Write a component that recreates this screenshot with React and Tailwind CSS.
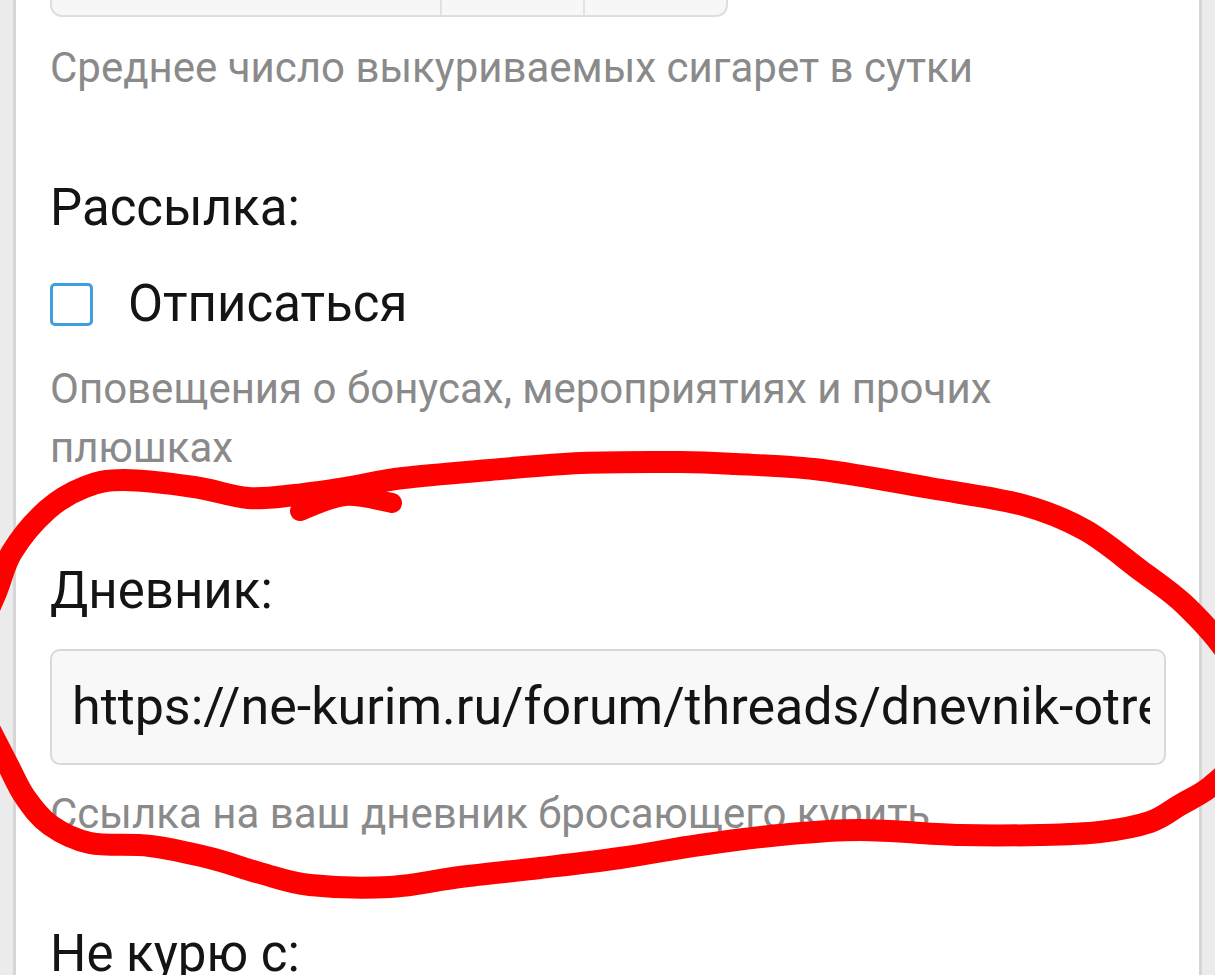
import React from 'react';

// points traced along the centre of the red marker stroke
const loop = [
  [-30, 650], [-5, 595], [12, 552], [47, 510], [85, 487], [124, 480], [194, 487], [248, 498], [295, 495],
  [345, 488], [403, 478], [490, 470], [581, 463], [680, 462], [736, 464], [822, 470], [930, 488],
  [1023, 505], [1085, 530], [1140, 570], [1185, 605], [1228, 655], [1250, 715], [1236, 760],
  [1210, 787], [1180, 805], [1150, 822], [1100, 832], [1040, 835], [960, 835], [860, 830], [780, 835],
  [700, 845], [620, 858], [540, 868], [460, 877], [390, 887], [310, 885], [260, 873],
  [210, 858], [150, 846], [90, 843], [50, 825], [25, 797], [8, 765], [-10, 730], [-30, 690],
];
const hook = [[300, 511], [345, 496], [392, 503]];

function smoothPath(pts) {
  let d = `M ${pts[0][0]} ${pts[0][1]}`;
  for (let i = 0; i < pts.length - 1; i++) {
    const p0 = pts[i - 1] || pts[i];
    const p1 = pts[i];
    const p2 = pts[i + 1];
    const p3 = pts[i + 2] || p2;
    const c1 = [p1[0] + (p2[0] - p0[0]) / 6, p1[1] + (p2[1] - p0[1]) / 6];
    const c2 = [p2[0] - (p3[0] - p1[0]) / 6, p2[1] - (p3[1] - p1[1]) / 6];
    d += ` C ${c1[0]} ${c1[1]} ${c2[0]} ${c2[1]} ${p2[0]} ${p2[1]}`;
  }
  return d;
}

const Label = ({ children, className = '' }) => (
  <div className={`text-[51px] leading-[60px] text-[#141414] ${className}`}>{children}</div>
);

const Hint = ({ children, className = '' }) => (
  <div className={`text-[42px] leading-[59px] text-[#8a8a8a] ${className}`}>{children}</div>
);

export default function App() {
  return (
    <div
      className="relative flex h-[975px] w-full overflow-hidden bg-[#ebebeb]"
      style={{ fontFamily: 'Roboto, "Noto Sans", sans-serif' }}
    >
      <div className="w-[13px] shrink-0" />
      <div className="min-w-0 flex-1 border-x-[3px] border-[#d6d6d6] bg-white pl-[34px] pr-[33px]">
        {/* tail of the number spinner above */}
        <div className="flex h-[17px] w-[678px] rounded-b-[12px] border-2 border-t-0 border-[#dedede] bg-[#f7f7f7]">
          <div className="w-[390px] border-r-2 border-[#e2e2e2]" />
          <div className="w-[143px] border-r-2 border-[#e2e2e2]" />
          <div className="flex-1" />
        </div>

        <Hint className="mt-[21px]">Среднее число выкуриваемых сигарет в сутки</Hint>

        <Label className="mt-[81px]">Рассылка:</Label>

        <div className="mt-[36px] flex h-[60px] items-center">
          <div className="h-[43px] w-[43px] rounded-[5px] border-[3px] border-[#3f9ee0] bg-white" />
          <span className="ml-[35px] text-[51px] leading-[60px] text-[#141414]">Отписаться</span>
        </div>

        <Hint className="mt-[25px]">
          Оповещения о бонусах, мероприятиях и прочих
          <br />
          плюшках
        </Hint>

        <Label className="mt-[84px]">Дневник:</Label>

        <div className="mt-[28px] flex h-[116px] w-full items-center rounded-[10px] border-2 border-[#d8d8d8] bg-[#f8f8f8] pl-[20px] pr-[14px]">
          <div className="min-w-0 flex-1 overflow-hidden whitespace-nowrap text-[52px] leading-[60px] text-[#141414]">
            https://ne-kurim.ru/forum/threads/dnevnik-otrekshegosya-ot-kureniya
          </div>
        </div>

        <Hint className="mt-[19px]">Ссылка на ваш дневник бросающего курить</Hint>

        <Label className="mt-[81px]">Не курю с:</Label>
      </div>
      <div className="w-[13px] shrink-0" />

      {/* red marker annotation drawn over the form */}
      <svg
        className="pointer-events-none absolute left-0 top-0"
        width="1215"
        height="975"
        viewBox="0 0 1215 975"
        fill="none"
      >
        <path d={smoothPath(loop)} stroke="#ff0000" strokeWidth="22" strokeLinecap="round" strokeLinejoin="round" />
        <path d={smoothPath(hook)} stroke="#ff0000" strokeWidth="20" strokeLinecap="round" strokeLinejoin="round" />
      </svg>
    </div>
  );
}
